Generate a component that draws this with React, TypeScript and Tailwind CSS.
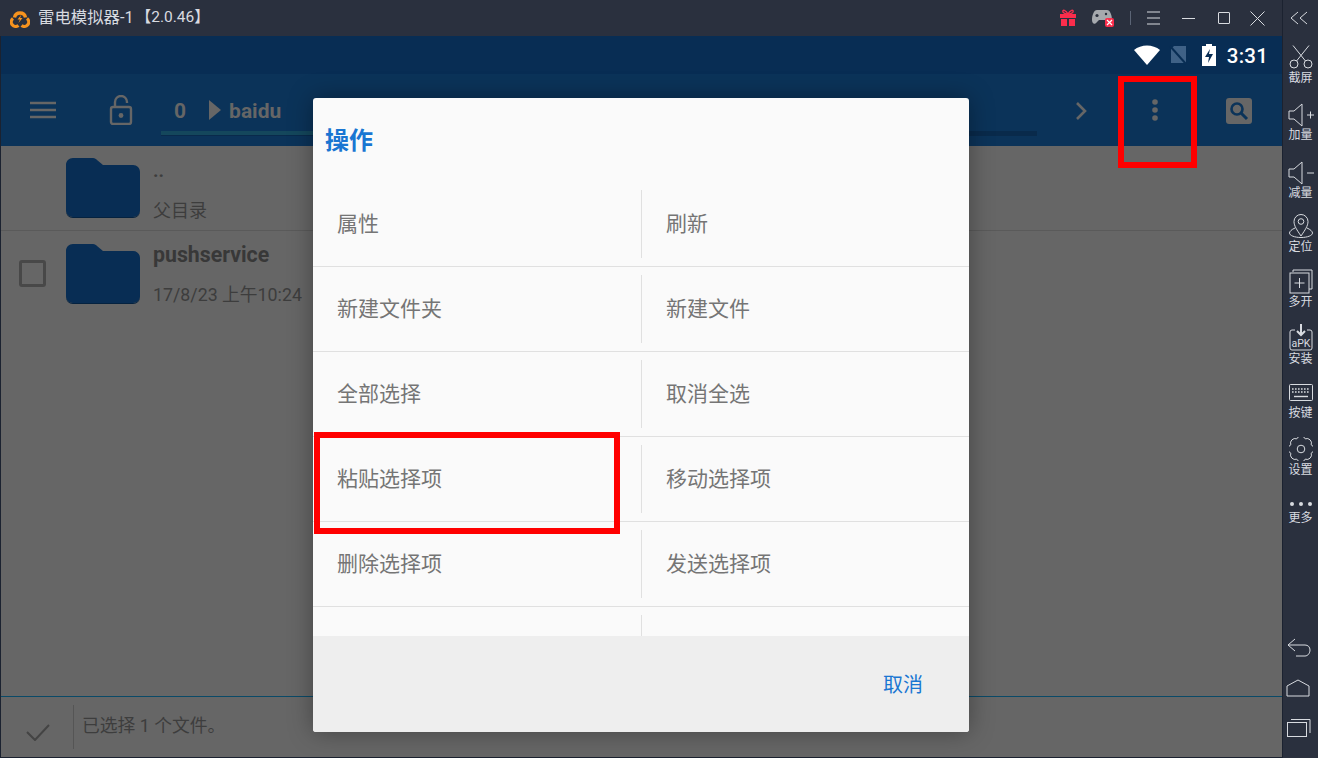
import { FC, ReactNode } from "react";

const cjk = "font-['Roboto','Noto_Sans_CJK_SC',sans-serif]";

const Side: FC<{ label: string; h: string; children: ReactNode }> = ({ label, h, children }) => (
  <div className={`flex flex-col items-center justify-end shrink-0 ${h}`}>
    {children}
    <span className="text-[12px] leading-[16px] text-[#d8dbe0]">{label}</span>
  </div>
);

const stroke = { fill: "none", stroke: "#d8dbe0", strokeWidth: 1 };

const Folder: FC = () => (
  <svg width="76" height="62" viewBox="0 0 76 62">
    <path d="M8 1h20c2 0 3 1 4 2l6 5h30c4 0 7 3 7 7v38c0 4-3 7-7 7H8c-4 0-7-3-7-7V8c0-4 3-7 7-7z" fill="#082d54" />
    <path d="M1 53c0 4 3 7 7 7h60c4 0 7-3 7-7v1c0 4-3 7-7 7H8c-4 0-7-3-7-7z" fill="#05223f" />
  </svg>
);

const Cell: FC<{ left: string; right: string }> = ({ left, right }) => (
  <div className="flex h-[85px] items-center border-b border-[#e0e0e0] text-[21px] text-[#757575]">
    <div className="w-[328px] pl-[24px] pt-[2px]">{left}</div>
    <div className="h-[68px] w-px bg-[#e0e0e0]" />
    <div className="pl-[24px] pt-[2px]">{right}</div>
  </div>
);

export default function App() {
  return (
    <div className={`relative flex h-[758px] w-[1318px] overflow-hidden bg-[#2a303e] ${cjk}`}>
      <div className="flex w-[1282px] flex-col">
        {/* 标题栏 */}
        <header className="flex h-[36px] shrink-0 items-center bg-[#2a303e] pl-[10px] text-[#d8dbe0]">
          <svg width="20" height="20" viewBox="0 0 20 20">
            <path d="M4.5 9.5a5.6 5.6 0 0 1 11 0" fill="none" stroke="#f7931e" strokeWidth="3.4" />
            <path d="M3 10.5a4.4 4.4 0 0 0 5.5 7" fill="none" stroke="#f7931e" strokeWidth="3.2" />
            <path d="M17 10.5a4.4 4.4 0 0 1-5.5 7" fill="none" stroke="#f7931e" strokeWidth="3.2" />
            <path d="M11.5 6.5L7.5 11.5h2.4l-1.4 3.5 4-5h-2.4z" fill="#f7931e" />
          </svg>
          <span className="ml-[8px] text-[16.4px]">雷电模拟器-1</span>
          <span className="ml-[2px] text-[15.5px]">【2.0.46】</span>
          <div className="ml-auto flex items-center">
            <svg width="16" height="18" viewBox="0 0 16 18" className="mr-[15px]">
              <path d="M0 5h16v4H0zM1 10h6v7H1zM9 10h6v7H9z" fill="#fb2d4c" />
              <path d="M8 5C6 1 2 0 3 3c0 1 3 2 5 2 2 0 5-1 5-2 1-3-3-2-5 2z" fill="none" stroke="#fb2d4c" strokeWidth="1.4" />
            </svg>
            <svg width="24" height="20" viewBox="0 0 24 20" className="mr-[15px]">
              <path d="M6 2h10c3 0 5 5 5 10 0 4-3 5-5 2l-2-2H8l-2 2c-2 3-5 2-5-2C1 7 3 2 6 2z" fill="#a6a9ae" />
              <circle cx="6" cy="7.5" r="1.6" fill="#2a303e" />
              <circle cx="15" cy="6" r="1.2" fill="#2a303e" />
              <rect x="14" y="10" width="9" height="9" rx="2" fill="#fb2d4c" />
              <path d="M16 12l5 5M21 12l-5 5" stroke="#fff" strokeWidth="1.2" />
            </svg>
            <div className="mr-[16px] h-[14px] w-px bg-[#5b6475]" />
            <svg width="13" height="14" viewBox="0 0 13 14" className="mr-[22px]">
              <path d="M0 1h13M0 7h13M0 13h13" {...stroke} />
            </svg>
            <div className="mr-[23px] h-px w-[13px] bg-[#d8dbe0]" />
            <div className="mr-[20px] h-[12px] w-[12px] rounded-[1px] border border-[#d8dbe0]" />
            <svg width="15" height="15" viewBox="0 0 15 15" className="mr-[17px]">
              <path d="M0.5 0.5l14 14M14.5 0.5l-14 14" {...stroke} />
            </svg>
          </div>
        </header>

        {/* 模拟器屏幕 */}
        <main className="flex flex-1 flex-col border-l border-[#1b2230]">
          <div className="flex h-[38px] shrink-0 items-center justify-end bg-[#082d54] pr-[14px] text-white">
            <svg width="26" height="20" viewBox="0 0 26 20" className="mr-[9px]">
              <path d="M0 5C7-1 19-1 26 5L13 20z" fill="#fff" />
            </svg>
            <svg width="18" height="20" viewBox="0 0 18 20" className="mr-[15px]">
              <path d="M5 1h12v17H2V4z" fill="#3f6186" />
              <path d="M1 1l16 18" stroke="#082d54" strokeWidth="2" />
            </svg>
            <svg width="14" height="22" viewBox="0 0 14 22" className="mr-[11px]">
              <path d="M4 0h6v2h4v20H0V2h4z" fill="#fff" />
              <path d="M8 5L3 13h4l-1 6 5-9H7z" fill="#082d54" />
            </svg>
            <span className="pt-[3px] text-[20.5px] font-medium tracking-[0.2px]">3:31</span>
          </div>

          <div className="relative flex h-[72px] shrink-0 items-center bg-[#0b3359] text-[#666]">
            <svg width="26" height="18" viewBox="0 0 26 18" className="ml-[29px]">
              <path d="M0 2h26M0 9h26M0 16h26" stroke="#666" strokeWidth="2.4" />
            </svg>
            <svg width="24" height="30" viewBox="0 0 24 30" className="ml-[53px]">
              <path d="M6 12V7a6 6 0 0 1 12 0v1" fill="none" stroke="#666" strokeWidth="2.4" />
              <rect x="2" y="12" width="20" height="17" rx="2" fill="none" stroke="#666" strokeWidth="2.4" />
              <circle cx="12" cy="20.5" r="2.4" fill="#666" />
            </svg>
            <span className="ml-[41px] pt-[4px] text-[21px] font-bold">0</span>
            <svg width="12" height="20" viewBox="0 0 12 20" className="ml-[23px]">
              <path d="M0 0l12 10L0 20z" fill="#666" />
            </svg>
            <span className="ml-[8px] pt-[4px] text-[21px] font-bold">baidu</span>
            <div className="absolute bottom-[10px] left-[160px] h-[5px] w-[876px] bg-[#092a4b]">
              <div className="h-[4px] w-[300px] bg-[#14475c]" />
            </div>
            <svg width="12" height="20" viewBox="0 0 12 20" className="absolute left-[1074px] top-[27px]">
              <path d="M2 2l8 8-8 8" fill="none" stroke="#666" strokeWidth="2.6" />
            </svg>
            <svg width="6" height="24" viewBox="0 0 6 24" className="absolute left-[1151px] top-[25px]">
              <circle cx="3" cy="3" r="2.8" fill="#666" />
              <circle cx="3" cy="11" r="2.8" fill="#666" />
              <circle cx="3" cy="19" r="2.8" fill="#666" />
            </svg>
            <svg width="26" height="26" viewBox="0 0 26 26" className="absolute left-[1225px] top-[24px]">
              <rect width="26" height="26" rx="3" fill="#666" />
              <circle cx="11" cy="11" r="5.5" fill="none" stroke="#0b3359" strokeWidth="2.6" />
              <path d="M15 15l6 6" stroke="#0b3359" strokeWidth="3" />
            </svg>
          </div>

          {/* 文件列表 */}
          <div className="flex-1 bg-[#666]">
            <div className="flex h-[85px] items-center border-b border-[#5a5a5a] pl-[64px]">
              <Folder />
              <div className="ml-[12px] pt-[6px] text-[#3d3d3d]">
                <div className="text-[19px] font-bold leading-[24px]">..</div>
                <div className="mt-[16px] text-[18px] leading-[24px]">父目录</div>
              </div>
            </div>
            <div className="flex h-[85px] items-center pl-[18px]">
              <div className="mr-[19px] h-[27px] w-[27px] rounded-[3px] border-[3px] border-[#484848]" />
              <Folder />
              <div className="ml-[12px] pt-[2px] text-[#3d3d3d]">
                <div className="text-[21.3px] font-bold leading-[24px] text-[#383838]">pushservice</div>
                <div className="mt-[16px] text-[17.8px] leading-[24px]">17/8/23 上午10:24</div>
              </div>
            </div>
          </div>

          <div className="flex h-[61px] shrink-0 items-center border-t border-[#0a4a68] bg-[#666]">
            <svg width="24" height="18" viewBox="0 0 24 18" className="ml-[25px] mt-[10px]">
              <path d="M1 9l8 8L23 2" fill="none" stroke="#444" strokeWidth="2" />
            </svg>
            <div className="ml-[23px] h-[44px] w-px bg-[#555]" />
            <span className="ml-[8px] pb-[2px] text-[17.8px] text-[#3d3d3d]">已选择 1 个文件。</span>
          </div>
          <div className="h-[1px] shrink-0 bg-[#1b2230]" />
        </main>
      </div>

      {/* 右侧工具栏 */}
      <aside className="flex w-[36px] shrink-0 flex-col border-l border-[#1b2230]">
        <svg width="18" height="14" viewBox="0 0 18 14" className="ml-[7px] mt-[11px] shrink-0">
          <path d="M8 1L1 7l7 6M17 1l-7 6 7 6" {...stroke} />
        </svg>
        <Side label="截屏" h="h-[61px]">
          <svg width="24" height="24" viewBox="0 0 24 24" className="mb-[1px]">
            <circle cx="5" cy="19" r="4" {...stroke} />
            <circle cx="19" cy="19" r="4" {...stroke} />
            <path d="M7.5 16L20 0.5M16.5 16L4 0.5" {...stroke} />
          </svg>
        </Side>
        <Side label="加量" h="h-[57px]">
          <svg width="26" height="24" viewBox="0 0 26 24">
            <path d="M1 8h5l8-7v22l-8-7H1zM19 12h7M22.5 8.5v7" {...stroke} />
          </svg>
        </Side>
        <Side label="减量" h="h-[58px]">
          <svg width="26" height="24" viewBox="0 0 26 24">
            <path d="M1 8h5l8-7v22l-8-7H1zM19 12h7" {...stroke} />
          </svg>
        </Side>
        <Side label="定位" h="h-[54px]">
          <svg width="24" height="24" viewBox="0 0 24 24" className="mb-[1px]">
            <path d="M12 22C8 16 5 12 5 7.5a7 7 0 0 1 14 0C19 12 16 16 12 22z" {...stroke} />
            <circle cx="12" cy="7.5" r="2.8" {...stroke} />
            <path d="M6 14C2.5 15.5 0.5 17.5 0.5 19c0 2.5 5 4.5 11.5 4.5s11.5-2 11.5-4.5c0-1.5-2-3.5-5.5-5" {...stroke} />
          </svg>
        </Side>
        <Side label="多开" h="h-[55px]">
          <svg width="24" height="25" viewBox="0 0 24 25">
            <path d="M4 3V1h19v19h-3" {...stroke} />
            <rect x="1" y="4" width="19" height="20" {...stroke} />
            <path d="M10.5 9v10M5.5 14h10" {...stroke} />
          </svg>
        </Side>
        <Side label="安装" h="h-[57px]">
          <svg width="24" height="27" viewBox="0 0 24 27">
            <path d="M6 6H3a2 2 0 0 0-2 2v16a2 2 0 0 0 2 2h18a2 2 0 0 0 2-2V8a2 2 0 0 0-2-2h-3" {...stroke} />
            <path d="M12 0v10M8 7l4 4 4-4" fill="none" stroke="#d8dbe0" strokeWidth="2" />
            <text x="12" y="23" textAnchor="middle" fontSize="10.5" fill="#d8dbe0">aPK</text>
          </svg>
        </Side>
        <Side label="按键" h="h-[54px]">
          <svg width="24" height="17" viewBox="0 0 24 17" className="mb-[4px]">
            <rect x="0.5" y="0.5" width="23" height="16" rx="1" {...stroke} />
            <path d="M3 5h18M3 8h18" stroke="#d8dbe0" strokeWidth="1.6" strokeDasharray="1.6 1.4" />
            <path d="M5 12.5h14" stroke="#d8dbe0" strokeWidth="1.4" />
          </svg>
        </Side>
        <Side label="设置" h="h-[57px]">
          <svg width="24" height="24" viewBox="0 0 24 24" className="mb-[1px]">
            <path d="M22.16 7.79A4.6 4.6 0 0 1 22.16 16.21 4.6 4.6 0 0 1 16.21 22.16 4.6 4.6 0 0 1 7.79 22.16 4.6 4.6 0 0 1 1.84 16.21 4.6 4.6 0 0 1 1.84 7.79 4.6 4.6 0 0 1 7.79 1.84 4.6 4.6 0 0 1 16.21 1.84 4.6 4.6 0 0 1 22.16 7.79z" {...stroke} />
            <circle cx="12" cy="12" r="3.8" {...stroke} />
          </svg>
        </Side>
        <Side label="更多" h="h-[48px]">
          <div className="mb-[4px] flex gap-[5px]">
            <div className="h-[4px] w-[4px] rounded-full bg-[#d8dbe0]" />
            <div className="h-[4px] w-[4px] rounded-full bg-[#d8dbe0]" />
            <div className="h-[4px] w-[4px] rounded-full bg-[#d8dbe0]" />
          </div>
        </Side>
        <svg width="24" height="20" viewBox="0 0 24 20" className="ml-[4px] mt-[112px] shrink-0">
          <path d="M8 1L1 7l7 6M1 7h17c3 0 5 2 5 5s-2 6-5 6H9" {...stroke} />
        </svg>
        <svg width="24" height="18" viewBox="0 0 24 18" className="ml-[3px] mt-[21px] shrink-0">
          <path d="M1 7l11-6 11 6v10H1z" {...stroke} />
        </svg>
        <svg width="24" height="19" viewBox="0 0 24 19" className="ml-[4px] mt-[21px] shrink-0">
          <rect x="0.5" y="4.5" width="19" height="14" {...stroke} />
          <path d="M4 1.5h19V15" {...stroke} />
        </svg>
      </aside>

      {/* 操作对话框 */}
      <div className="absolute left-[313px] top-[98px] flex h-[634px] w-[656px] flex-col overflow-hidden rounded-[3px] bg-[#fafafa] shadow-[0_0_24px_rgba(0,0,0,0.35)]">
        <div className="flex h-[84px] shrink-0 items-center pl-[12px] pt-[2px] text-[24px] font-bold text-[#1976d2]">操作</div>
        <Cell left="属性" right="刷新" />
        <Cell left="新建文件夹" right="新建文件" />
        <Cell left="全部选择" right="取消全选" />
        <Cell left="粘贴选择项" right="移动选择项" />
        <Cell left="删除选择项" right="发送选择项" />
        <div className="flex h-[29px] shrink-0">
          <div className="ml-[328px] mt-[8px] w-px bg-[#e0e0e0]" />
        </div>
        <div className="flex flex-1 items-center justify-end bg-[#eeeeee] pr-[46px] pt-[1px] text-[20px] text-[#1976d2]">取消</div>
      </div>

      {/* 红框标注 */}
      <div className="absolute left-[1118px] top-[76px] h-[92px] w-[79px] border-[6px] border-[#ff0000]" />
      <div className="absolute left-[314px] top-[432px] h-[102px] w-[306px] border-[6px] border-[#ff0000]" />
    </div>
  );
}
